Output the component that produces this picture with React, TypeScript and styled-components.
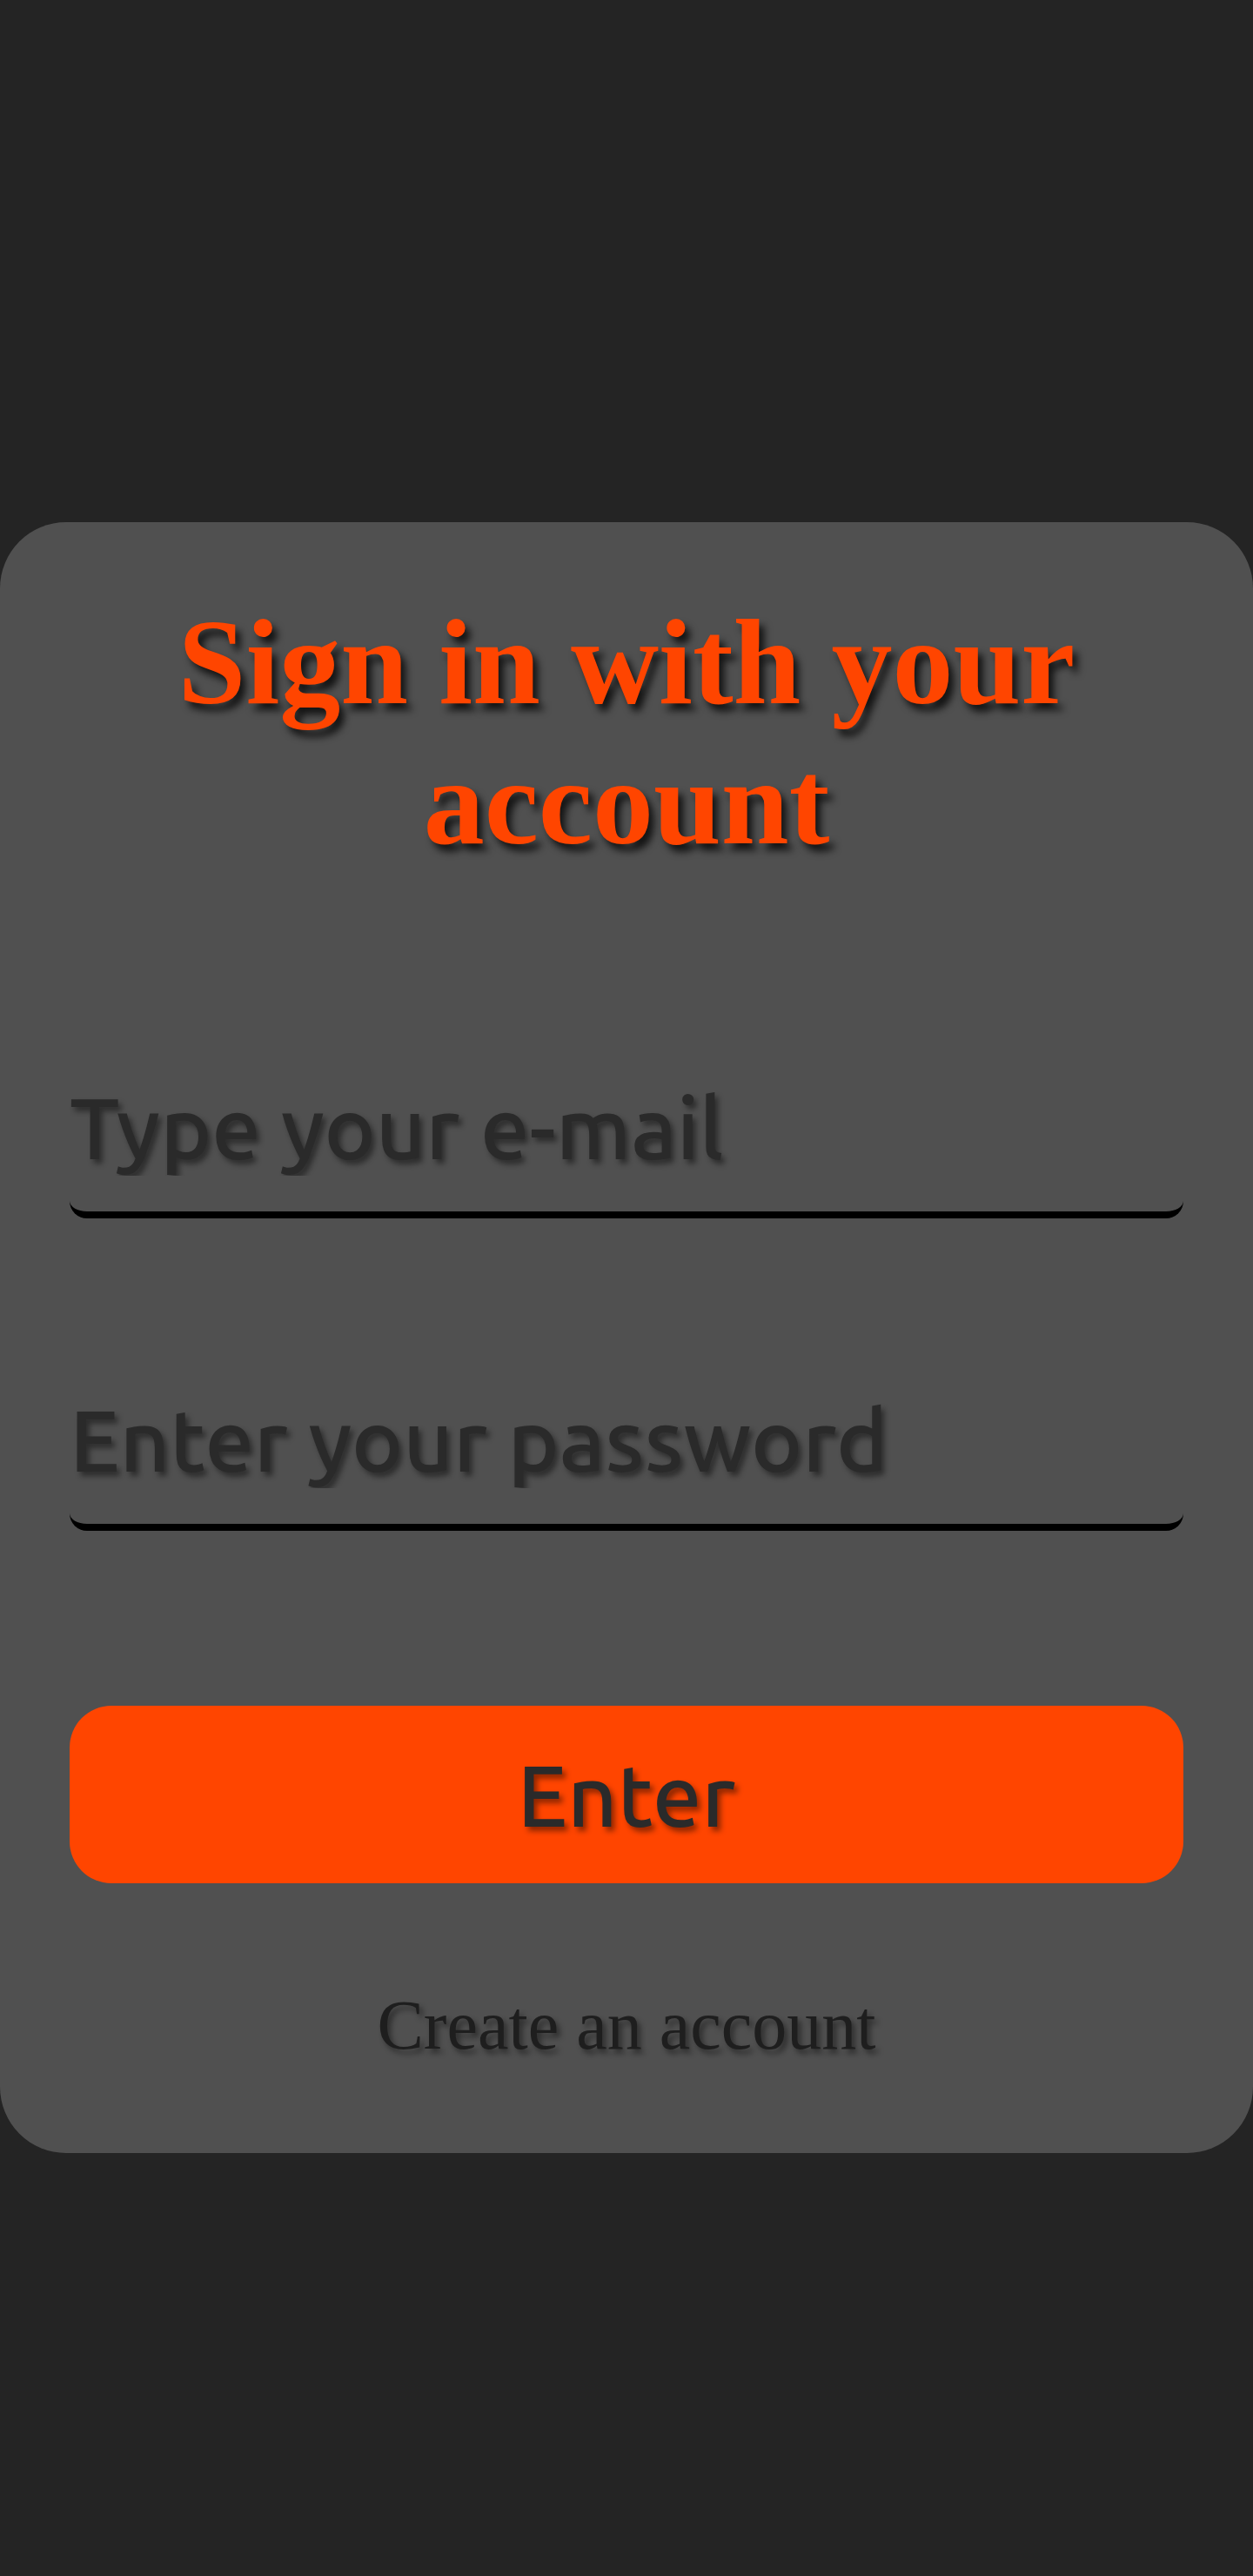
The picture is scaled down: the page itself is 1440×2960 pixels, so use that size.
import styled, { createGlobalStyle } from 'styled-components'

const GlobalStyle = createGlobalStyle`
  html, body {
    margin: 0;
    padding: 0;
    background: #242424;
  }

  * {
    box-sizing: border-box;
  }
`

export default function App () {
  return (
    <Page>
      <GlobalStyle />
      <Card onSubmit={(e) => e.preventDefault()}>
        <Title>Sign in with your account</Title>
        <Fields>
          <Field type='email' placeholder='Type your e-mail' />
          <Field type='password' placeholder='Enter your password' />
        </Fields>
        <Submit type='submit'>Enter</Submit>
        <CreateLink href='#'>Create an account</CreateLink>
      </Card>
    </Page>
  )
}

const Page = styled.main`
  min-height: 2960px;
  padding-top: 600px;
  background: #242424;
`

const Card = styled.form`
  display: flex;
  flex-direction: column;
  align-items: stretch;
  width: 100%;
  padding: 80px 80px 101px;
  background: #505050;
  border-radius: 76px;
`

const Title = styled.h1`
  margin: 0;
  font-family: 'Liberation Serif', 'Times New Roman', serif;
  font-size: 140px;
  font-weight: 700;
  line-height: normal;
  text-align: center;
  color: #ff4500;
  text-shadow: 6px 8px 8px rgba(0, 0, 0, 0.75);
`

const Fields = styled.div`
  display: flex;
  flex-direction: column;
  gap: 157px;
  margin-top: 196px;
`

const Field = styled.input`
  display: block;
  width: 100%;
  height: 202px;
  padding: 0;
  border: none;
  border-bottom: 8px solid #000;
  border-radius: 20px;
  background: transparent;
  outline: none;
  font-family: 'Ubuntu', 'Open Sans', sans-serif;
  font-size: 100px;
  font-weight: 500;
  color: #2a2a2a;

  &::placeholder {
    color: #2a2a2a;
    opacity: 1;
    text-shadow: 4px 5px 6px rgba(0, 0, 0, 0.45);
  }
`

const Submit = styled.button`
  height: 204px;
  margin-top: 201px;
  border: none;
  border-radius: 48px;
  background: #ff4500;
  font-family: 'Ubuntu', 'Open Sans', sans-serif;
  font-size: 100px;
  font-weight: 500;
  color: #2a2a2a;
  text-shadow: 4px 5px 6px rgba(0, 0, 0, 0.45);
  cursor: pointer;
`

const CreateLink = styled.a`
  align-self: center;
  margin-top: 118px;
  font-family: 'Liberation Serif', 'Times New Roman', serif;
  font-size: 80px;
  line-height: normal;
  color: #1e1e1e;
  text-decoration: none;
  text-shadow: 4px 5px 6px rgba(0, 0, 0, 0.45);
`
